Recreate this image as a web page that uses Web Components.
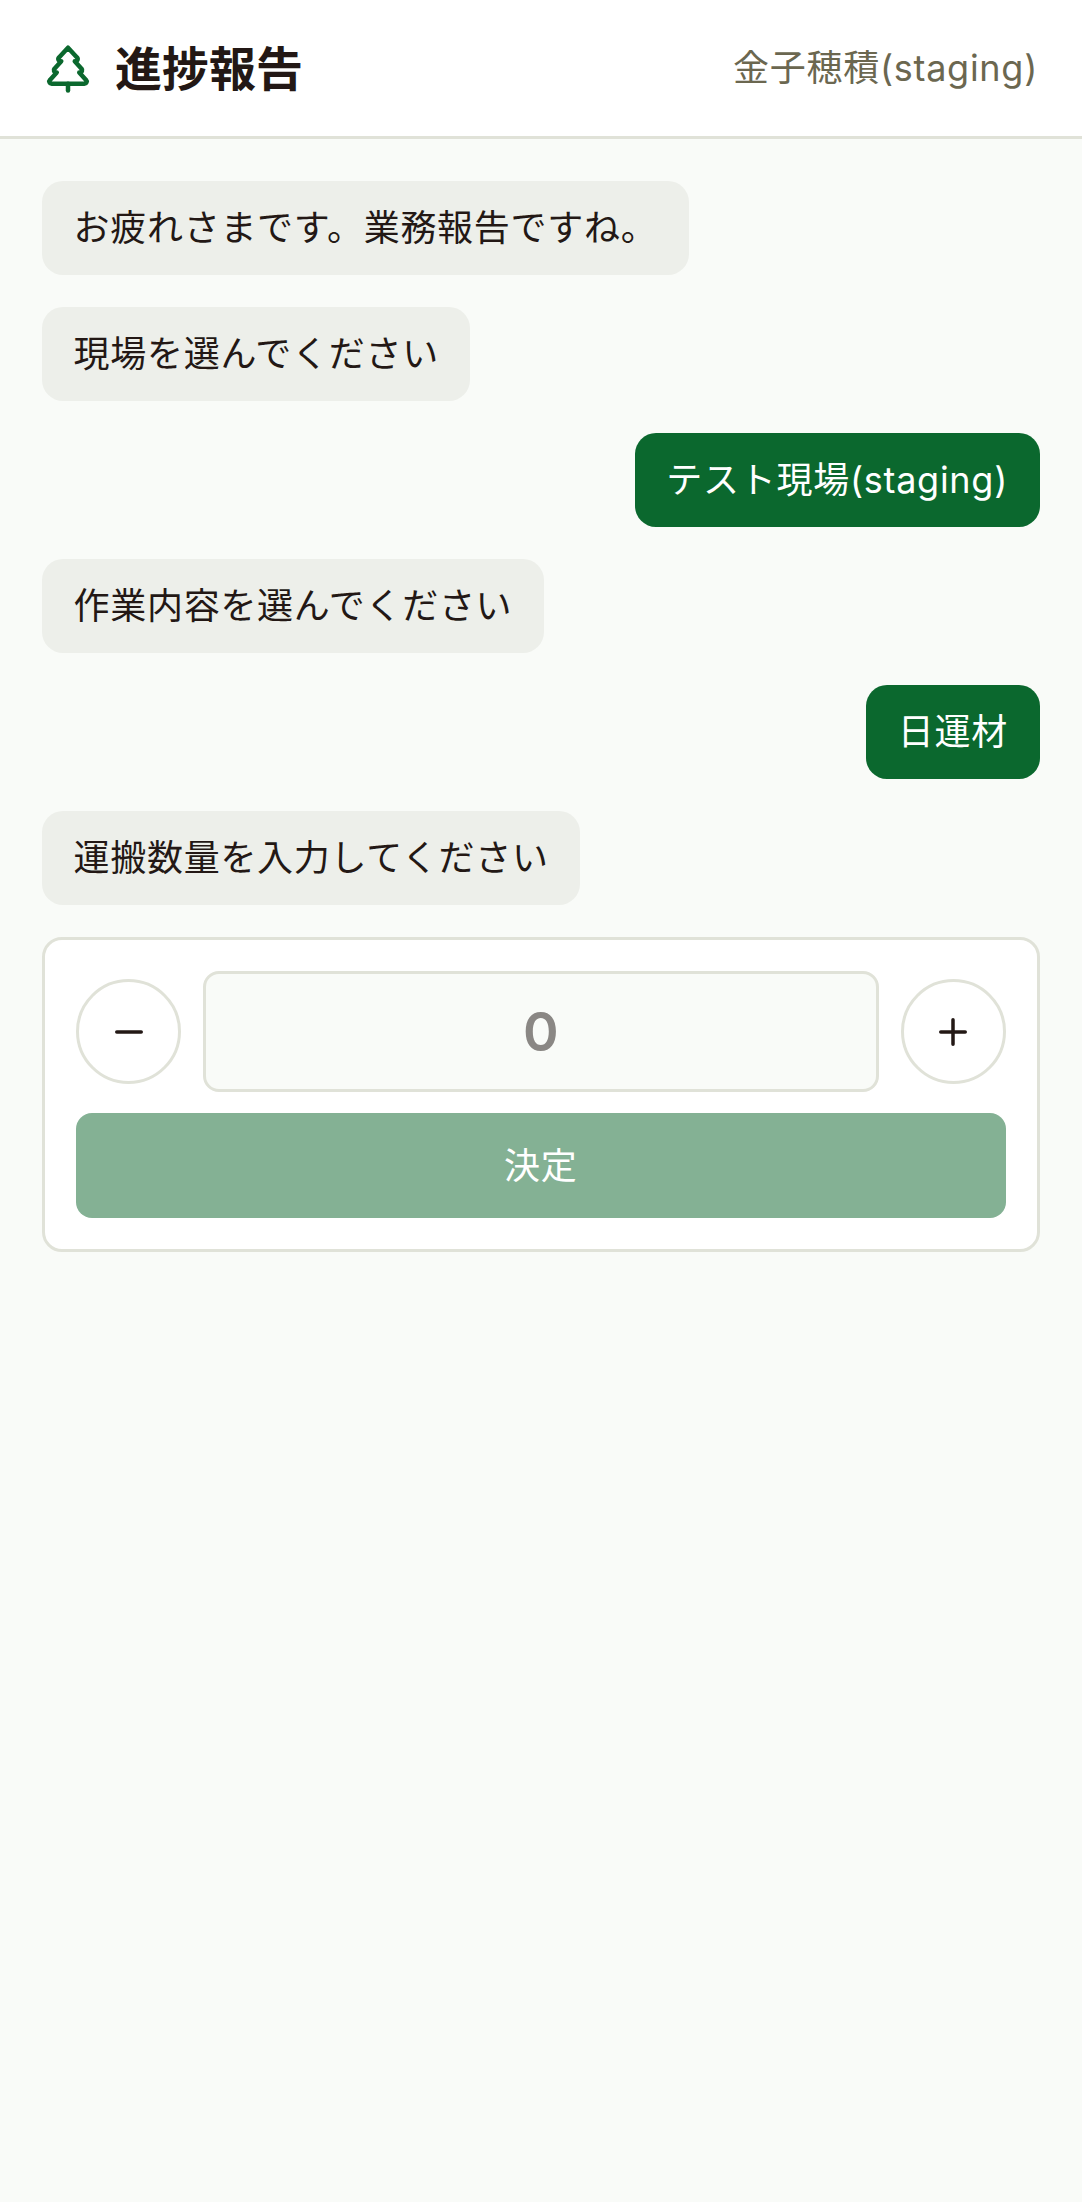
<!DOCTYPE html>
<html lang="ja">
<head>
<meta charset="utf-8">
<title>進捗報告</title>
<style>
  html, body { margin: 0; padding: 0; height: 100%; }
  body {
    background: #f9fbf8;
    color: #231815;
    font-family: "Inter", "Noto Sans CJK JP", sans-serif;
    letter-spacing: 0.72px;
  }
</style>
</head>
<body>
<report-app>
  <app-header title-text="進捗報告" user="金子穂積(staging)"></app-header>
  <chat-log>
    <chat-bubble>お疲れさまです。業務報告ですね。</chat-bubble>
    <chat-bubble>現場を選んでください</chat-bubble>
    <chat-bubble mine>テスト現場(staging)</chat-bubble>
    <chat-bubble>作業内容を選んでください</chat-bubble>
    <chat-bubble mine>日運材</chat-bubble>
    <chat-bubble>運搬数量を入力してください</chat-bubble>
    <quantity-card value="0" label="決定"></quantity-card>
  </chat-log>
</report-app>

<script>
class ReportApp extends HTMLElement {
  constructor(){
    super();
    this.attachShadow({mode: 'open'}).innerHTML = `
    <style>
    :host {
      display: flex;
      flex-direction: column;
      min-height: 2202px;
    }
    </style>
    <slot></slot>
    `;
  }
}

class AppHeader extends HTMLElement {
  connectedCallback(){
    this.attachShadow({mode: 'open'}).innerHTML = `
    <style>
    :host {
      display: flex;
      align-items: center;
      justify-content: space-between;
      height: 136px;
      padding: 0 44px 0 41px;
      background: #fff;
      border-bottom: 3px solid #e0e2d8;
    }
    .brand {
      display: flex;
      align-items: center;
      gap: 20px;
    }
    svg { display: block; }
    h1 {
      margin: 0;
      padding-top: 2px;
      font-size: 47px;
      line-height: 70px;
      font-weight: 700;
      letter-spacing: 0;
      color: #231815;
    }
    .user {
      font-size: 36px;
      line-height: 54px;
      color: #6b6750;
    }
    </style>
    <div class="brand">
      <svg width="54" height="54" viewBox="0 0 24 24" fill="none" stroke="#0b682e" stroke-width="2" stroke-linejoin="round" stroke-linecap="round">
        <path d="m17 14 3 3.300a1 1 0 0 1-.7 1.700H4.700a1 1 0 0 1-.7-1.700L7 14h-.3a1 1 0 0 1-.7-1.700L9 9h-.2A1 1 0 0 1 8 7.300L12 3l4 4.300a1 1 0 0 1-.8 1.700H15l3 3.300a1 1 0 0 1-.7 1.700H17Z"/>
        <path d="M12 22v-3"/>
      </svg>
      <h1>${this.getAttribute('title-text')}</h1>
    </div>
    <div class="user">${this.getAttribute('user')}</div>
    `;
  }
}

class ChatLog extends HTMLElement {
  constructor(){
    super();
    this.attachShadow({mode: 'open'}).innerHTML = `
    <style>
    :host {
      display: flex;
      flex-direction: column;
      gap: 32px;
      padding: 42px 42.5px 43px 42px;
    }
    </style>
    <slot></slot>
    `;
  }
}

class ChatBubble extends HTMLElement {
  constructor(){
    super();
    this.attachShadow({mode: 'open'}).innerHTML = `
    <style>
    :host {
      display: block;
      align-self: flex-start;
      padding: 20px 31.500px;
      font-size: 36px;
      line-height: 54px;
      color: #231815;
      background: #edefea;
      border-radius: 21px;
    }
    :host([mine]) {
      align-self: flex-end;
      color: #fff;
      background: #0b682e;
    }
    </style>
    <slot></slot>
    `;
  }
}

class QuantityCard extends HTMLElement {
  connectedCallback(){
    this.attachShadow({mode: 'open'}).innerHTML = `
    <style>
    :host {
      display: flex;
      flex-direction: column;
      gap: 21px;
      padding: 31px;
      background: #fff;
      border: 3px solid #e0e2d8;
      border-radius: 20px;
    }
    .row {
      display: flex;
      align-items: center;
      gap: 21.500px;
    }
    .round {
      flex: none;
      display: flex;
      align-items: center;
      justify-content: center;
      box-sizing: border-box;
      width: 105px;
      height: 105px;
      background: #fff;
      border: 3px solid #e0e2d8;
      border-radius: 50%;
    }
    .value {
      flex: 1;
      box-sizing: border-box;
      height: 121px;
      display: flex;
      align-items: center;
      justify-content: center;
      font-size: 54px;
      font-weight: 600;
      letter-spacing: 0;
      color: #8a8784;
      background: #f9fbf8;
      border: 3px solid #e0e2d8;
      border-radius: 16px;
    }
    .submit {
      display: flex;
      align-items: center;
      justify-content: center;
      height: 105px;
      font-size: 36px;
      line-height: 54px;
      color: #fff;
      background: #84b194;
      border-radius: 16px;
    }
    </style>
    <div class="row">
      <div class="round">
        <svg width="28" height="28" viewBox="0 0 28 28" stroke="#231815" stroke-width="3.500" stroke-linecap="round"><path d="M1.750 14 H26.250"/></svg>
      </div>
      <div class="value">${this.getAttribute('value')}</div>
      <div class="round">
        <svg width="28" height="28" viewBox="0 0 28 28" stroke="#231815" stroke-width="3.500" stroke-linecap="round"><path d="M1.750 14 H26.250 M14 1.750 V26.250"/></svg>
      </div>
    </div>
    <div class="submit">${this.getAttribute('label')}</div>
    `;
  }
}

window.customElements.define('report-app', ReportApp);
window.customElements.define('app-header', AppHeader);
window.customElements.define('chat-log', ChatLog);
window.customElements.define('chat-bubble', ChatBubble);
window.customElements.define('quantity-card', QuantityCard);
</script>
</body>
</html>
